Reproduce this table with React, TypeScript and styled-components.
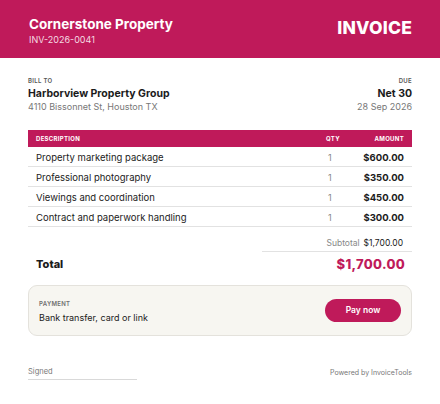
import React from "react";
import styled, { createGlobalStyle } from "styled-components";

const brand = "#BF1A5A";

const Global = createGlobalStyle`
  html, body { margin: 0; padding: 0; background: #ffffff; }
  body { font-family: Inter, "Noto Sans", sans-serif; color: #1b1b1b; }
  * { box-sizing: border-box; }
`;

const Page = styled.div`
  width: 440px;
  height: 404px;
  background: #fff;
  display: flex;
  flex-direction: column;
`;

const Header = styled.header`
  height: 58px;
  background: ${brand};
  padding: 0 28px 0 29px;
  display: flex;
  align-items: center;
  justify-content: space-between;
  color: #fff;
`;

const Brand = styled.div`
  display: flex;
  flex-direction: column;
  gap: 2px;
  margin-top: 3px;
`;

const BrandName = styled.div`
  font-size: 13.5px;
  font-weight: 700;
  line-height: 16px;
`;

const InvNo = styled.div`
  font-size: 9px;
  line-height: 11px;
  color: rgba(255, 255, 255, 0.85);
`;

const InvoiceWord = styled.div`
  font-size: 17.5px;
  font-weight: 800;
  letter-spacing: 0.2px;
  margin-bottom: 3px;
`;

const Body = styled.main`
  padding: 18px 28px 0;
  display: flex;
  flex-direction: column;
`;

const BillRow = styled.section`
  display: flex;
  justify-content: space-between;
`;

const BillCol = styled.div<{ $right?: boolean }>`
  display: flex;
  flex-direction: column;
  align-items: ${(p) => (p.$right ? "flex-end" : "flex-start")};
`;

const TinyLabel = styled.div`
  font-size: 6px;
  font-weight: 600;
  letter-spacing: 0.3px;
  color: #555;
  line-height: 9px;
  text-transform: uppercase;
`;

const StrongLine = styled.div`
  font-size: 10.5px;
  font-weight: 700;
  line-height: 14px;
  margin-top: 2px;
  color: #1b1b1b;
`;

const MutedLine = styled.div`
  font-size: 9px;
  line-height: 12px;
  color: #777;
`;

const Table = styled.div`
  margin-top: 17px;
  display: flex;
  flex-direction: column;
`;

const Row = styled.div<{ $head?: boolean }>`
  display: grid;
  grid-template-columns: 1fr 40px 38px;
  align-items: center;
  padding: 0 8px;
  height: ${(p) => (p.$head ? "17px" : "20px")};
  background: ${(p) => (p.$head ? brand : "transparent")};
  border-bottom: ${(p) => (p.$head ? "none" : "1px solid #e2e2e2")};
`;

const HeadCell = styled.div<{ $right?: boolean }>`
  font-size: 6px;
  font-weight: 700;
  letter-spacing: 0.3px;
  color: #fff;
  text-align: ${(p) => (p.$right ? "right" : "left")};
  white-space: nowrap;
`;

const Desc = styled.div`
  font-size: 9.5px;
  color: #1b1b1b;
  padding-top: 1px;
`;

const Qty = styled.div`
  font-size: 9px;
  color: #888;
  padding-left: 2px;
  padding-top: 1px;
`;

const Amount = styled.div`
  font-size: 9.5px;
  font-weight: 700;
  text-align: right;
  white-space: nowrap;
  justify-self: end;
  padding-top: 1px;
`;

const SubtotalRow = styled.div`
  align-self: flex-end;
  width: 150px;
  display: flex;
  justify-content: flex-end;
  align-items: baseline;
  gap: 4px;
  padding: 11px 9px 3px 0;
  border-bottom: 1px solid #e2e2e2;
`;

const SubLabel = styled.span`
  font-size: 8.5px;
  color: #888;
`;

const SubValue = styled.span`
  font-size: 8.5px;
  color: #1b1b1b;
`;

const TotalRow = styled.div`
  display: flex;
  justify-content: space-between;
  align-items: center;
  padding: 4px 7px 0 8px;
`;

const TotalLabel = styled.div`
  font-size: 11px;
  font-weight: 800;
`;

const TotalValue = styled.div`
  font-size: 13px;
  font-weight: 800;
  color: ${brand};
  letter-spacing: 0.3px;
`;

const PayBox = styled.section`
  margin-top: 13px;
  height: 51px;
  background: #f7f6f1;
  border: 1px solid #e4e2dc;
  border-radius: 9px;
  padding: 0 10px 0 10px;
  display: flex;
  justify-content: space-between;
  align-items: center;
`;

const PayInfo = styled.div`
  display: flex;
  flex-direction: column;
  gap: 4px;
`;

const PayLabel = styled(TinyLabel)`
  color: #6f6f6f;
`;

const PayText = styled.div`
  font-size: 9px;
  color: #1b1b1b;
`;

const PayButton = styled.button`
  width: 76px;
  height: 23px;
  border: none;
  border-radius: 12px;
  background: ${brand};
  color: #fff;
  font-family: inherit;
  font-size: 8.5px;
  font-weight: 600;
  margin-bottom: 1px;
`;

const Footer = styled.footer`
  display: flex;
  justify-content: space-between;
  align-items: flex-start;
  padding: 31px 28px 0;
`;

const SignBlock = styled.div`
  width: 109px;
  border-bottom: 1px solid #d9d9d9;
  font-size: 7.5px;
  color: #777;
  padding-bottom: 3px;
`;

const Powered = styled.div`
  font-size: 7px;
  color: #777;
  margin-top: 1px;
`;

const items = [
  { d: "Property marketing package", q: 1, a: "$600.00" },
  { d: "Professional photography", q: 1, a: "$350.00" },
  { d: "Viewings and coordination", q: 1, a: "$450.00" },
  { d: "Contract and paperwork handling", q: 1, a: "$300.00" },
];

export default function App() {
  return (
    <Page>
      <Global />
      <Header>
        <Brand>
          <BrandName>Cornerstone Property</BrandName>
          <InvNo>INV-2026-0041</InvNo>
        </Brand>
        <InvoiceWord>INVOICE</InvoiceWord>
      </Header>
      <Body>
        <BillRow>
          <BillCol>
            <TinyLabel>Bill to</TinyLabel>
            <StrongLine>Harborview Property Group</StrongLine>
            <MutedLine>4110 Bissonnet St, Houston TX</MutedLine>
          </BillCol>
          <BillCol $right>
            <TinyLabel>Due</TinyLabel>
            <StrongLine>Net 30</StrongLine>
            <MutedLine>28 Sep 2026</MutedLine>
          </BillCol>
        </BillRow>
        <Table>
          <Row $head>
            <HeadCell>DESCRIPTION</HeadCell>
            <HeadCell>QTY</HeadCell>
            <HeadCell $right>AMOUNT</HeadCell>
          </Row>
          {items.map((it) => (
            <Row key={it.d}>
              <Desc>{it.d}</Desc>
              <Qty>{it.q}</Qty>
              <Amount>{it.a}</Amount>
            </Row>
          ))}
        </Table>
        <SubtotalRow>
          <SubLabel>Subtotal</SubLabel>
          <SubValue>$1,700.00</SubValue>
        </SubtotalRow>
        <TotalRow>
          <TotalLabel>Total</TotalLabel>
          <TotalValue>$1,700.00</TotalValue>
        </TotalRow>
        <PayBox>
          <PayInfo>
            <PayLabel>Payment</PayLabel>
            <PayText>Bank transfer, card or link</PayText>
          </PayInfo>
          <PayButton>Pay now</PayButton>
        </PayBox>
      </Body>
      <Footer>
        <SignBlock>Signed</SignBlock>
        <Powered>Powered by InvoiceTools</Powered>
      </Footer>
    </Page>
  );
}
